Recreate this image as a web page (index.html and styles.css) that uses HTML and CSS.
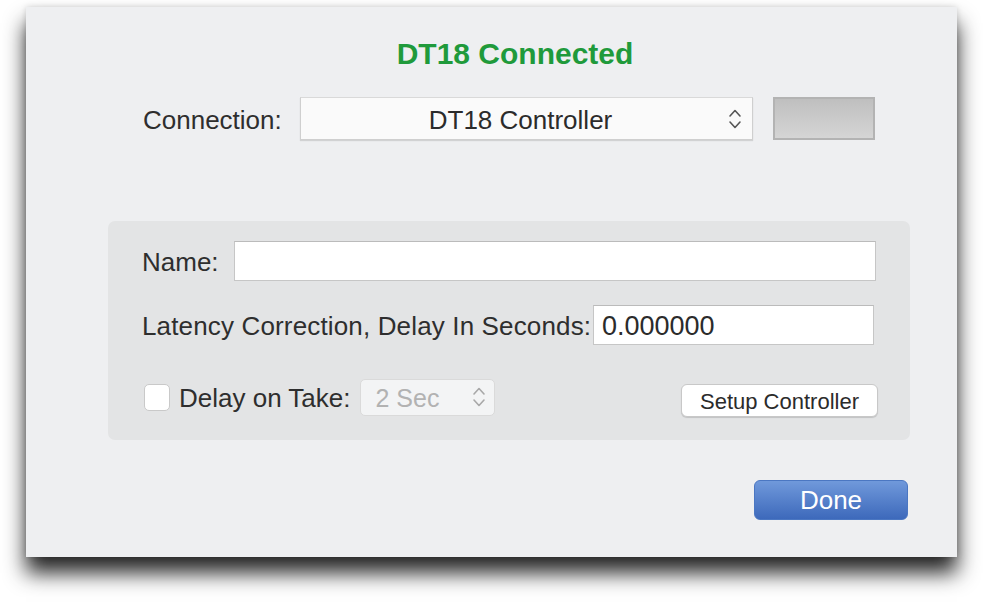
FILE: index.html
```html
<!DOCTYPE html>
<html lang="en">
<head>
    <meta charset="UTF-8">
    <meta name="viewport" content="width=device-width, initial-scale=1.0">
    <title>DT18 Connection</title>
    <link rel="stylesheet" href="styles.css">
</head>
<body>
    <div class="window">
        <h1 class="status">DT18 Connected</h1>

        <div class="connection-row">
            <span class="conn-label">Connection:</span>
            <div class="popup">
                <span class="popup-value">DT18 Controller</span>
                <svg class="chevrons" width="14" height="26" viewBox="0 0 14 26">
                    <path d="M2 10 L7 4.5 L12 10" />
                    <path d="M2 16 L7 21.5 L12 16" />
                </svg>
            </div>
            <div class="swatch"></div>
        </div>

        <div class="group">
            <div class="field-row">
                <label class="name-label" for="name">Name:</label>
                <input type="text" id="name" class="text-field name-field">
            </div>

            <div class="field-row latency-row">
                <label class="latency-label" for="latency">Latency Correction, Delay In Seconds:</label>
                <input type="text" id="latency" class="text-field latency-field" value="0.000000">
            </div>

            <div class="option-row">
                <span class="checkbox"></span>
                <span class="delay-label">Delay on Take:</span>
                <div class="popup small-popup">
                    <span class="popup-value">2 Sec</span>
                    <svg class="chevrons" width="14" height="26" viewBox="0 0 14 26">
                        <path d="M2 10 L7 4.5 L12 10" />
                        <path d="M2 16 L7 21.5 L12 16" />
                    </svg>
                </div>
                <button class="setup-button">Setup Controller</button>
            </div>
        </div>

        <button class="done-button">Done</button>
    </div>
</body>
</html>
```

FILE: styles.css
```css
body {
    font-family: "Liberation Sans", Arial, sans-serif;
    background-color: #fff;
    color: #2e2e2e;
    margin: 0;
    padding: 7px 0 45px 26px;
}

.window {
    width: 931px;
    height: 550px;
    box-sizing: border-box;
    background-color: #eeeff1;
    box-shadow: 0 16px 20px rgba(0, 0, 0, 0.85), 0 0 6px rgba(0, 0, 0, 0.15);
    padding: 30px 47px 0 82px;
    display: flex;
    flex-direction: column;
}

.status {
    margin: 0;
    height: 34px;
    line-height: 34px;
    font-size: 30px;
    font-weight: bold;
    color: #1f9a3b;
    text-align: center;
    padding-left: 12px;
}

.connection-row {
    display: flex;
    align-items: center;
    margin-top: 26px;
    padding-left: 35px;
    height: 43px;
}

.conn-label {
    width: 157px;
    font-size: 26px;
    padding-top: 4px;
}

.popup {
    display: flex;
    align-items: center;
    box-sizing: border-box;
    width: 453px;
    height: 43px;
    background-color: #fafafa;
    border: 1px solid #cfcfcf;
    border-top-color: #d9d9d9;
    box-shadow: 0 1px 1px rgba(0, 0, 0, 0.12);
    font-size: 26px;
    padding: 0 10px 0 12px;
}

.popup-value {
    flex: 1;
    text-align: center;
    color: #2b2b2b;
    padding-top: 4px;
}

.chevrons {
    flex-shrink: 0;
}

.chevrons path {
    fill: none;
    stroke: #555;
    stroke-width: 1.6;
    stroke-linecap: round;
    stroke-linejoin: round;
}

.swatch {
    width: 102px;
    height: 43px;
    box-sizing: border-box;
    margin-left: 20px;
    border: 2px solid #b3b3b3;
    background: linear-gradient(#bfbfbf, #d5d5d5);
}

.group {
    margin-top: 81px;
    height: 219px;
    box-sizing: border-box;
    background-color: #e3e4e5;
    border-radius: 7px;
    padding: 20px 34px 0 34px;
}

.field-row {
    display: flex;
    align-items: center;
    height: 40px;
}

.latency-row {
    margin-top: 24px;
}

label,
.delay-label {
    font-size: 26px;
    color: #2e2e2e;
    padding-top: 2px;
}

.name-label {
    width: 92px;
}

.latency-label {
    width: 451px;
    letter-spacing: 0.15px;
}

.text-field {
    box-sizing: border-box;
    height: 40px;
    background-color: #fff;
    border: 1px solid #c6c6c6;
    border-top-color: #bbb;
    font-family: "Liberation Sans", Arial, sans-serif;
    font-size: 26px;
    color: #2b2b2b;
    padding: 2px 8px 0;
    outline: none;
}

.name-field {
    flex: 1;
}

.latency-field {
    width: 281px;
    font-size: 27px;
}

.option-row {
    display: flex;
    align-items: center;
    margin-top: 32px;
    height: 40px;
    padding-left: 2px;
}

.checkbox {
    width: 26px;
    height: 27px;
    box-sizing: border-box;
    background-color: #fff;
    border: 1px solid #c9c9c9;
    border-radius: 5px;
    margin-right: 9px;
}

.delay-label {
    margin-right: 9px;
}

.small-popup {
    width: 135px;
    height: 37px;
    background-color: #f3f4f5;
    border: 1px solid #dadada;
    border-radius: 5px;
    box-shadow: none;
    padding: 0 8px 0 15px;
    font-size: 25px;
}

.small-popup .popup-value {
    text-align: left;
    color: #b2b2b2;
    padding-top: 2px;
}

.small-popup .chevrons path {
    stroke: #a8a8a8;
}

.setup-button {
    margin-left: auto;
    margin-top: 7px;
    margin-right: -2px;
    width: 197px;
    height: 33px;
    background-color: #fff;
    border: 1px solid #c8c8c8;
    border-radius: 6px;
    box-shadow: 0 1px 1px rgba(0, 0, 0, 0.15);
    font-family: "Liberation Sans", Arial, sans-serif;
    font-size: 22px;
    color: #2b2b2b;
    padding: 2px 0 0;
}

.done-button {
    align-self: flex-end;
    margin-top: 40px;
    margin-right: 2px;
    width: 154px;
    height: 40px;
    border: 1px solid #4b77c2;
    border-radius: 6px;
    background: linear-gradient(#7099db, #3d69bb);
    font-family: "Liberation Sans", Arial, sans-serif;
    font-size: 26px;
    color: #fff;
    padding: 0;
}
```
